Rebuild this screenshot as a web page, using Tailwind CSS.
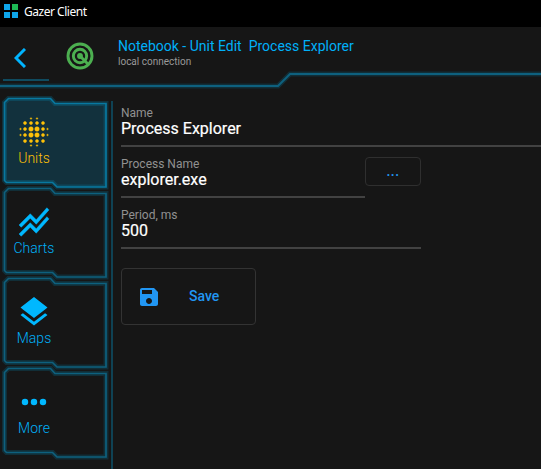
<!DOCTYPE html>
<html lang="en">
<head>
<meta charset="utf-8">
<title>Gazer Client</title>
<script src="https://cdn.jsdelivr.net/npm/@tailwindcss/browser@4"></script>
</head>
<body class="w-[541px] h-[469px] overflow-hidden bg-[#161616] font-[Roboto,sans-serif] flex flex-col">
<div class="h-[27px] shrink-0 bg-black flex items-start pl-1 pt-1 gap-[6px]">
  <svg class="size-[14px]" viewBox="0 0 14 14"><path fill="#0ea5e9" d="M0 0h6v6H0zM0 8h6v6H0zM8 8h6v6H8z"/><path fill="#1db954" d="M8 0h6v6H8z"/></svg>
  <span class="font-['Noto_Sans',sans-serif] text-[12px] leading-[16px] tracking-[-0.48px] text-white">Gazer Client</span>
</div>
<header class="h-[63px] shrink-0 relative flex">
  <svg class="absolute left-0 top-0 w-[541px] h-[63px]" viewBox="0 27 541 63" fill="none">
    <path d="M0 86H278L290 74H541" stroke="#0090c0" stroke-opacity=".2" stroke-width="5"/>
    <path d="M0 86H278L290 74H541" stroke="#0e607e" stroke-width="2"/>
  </svg>
  <div class="ml-[3px] w-[46px] h-[54px] border-b-2 border-[#0f4b60] flex items-center">
    <svg class="ml-[11px] mt-[9px] w-[12px] h-[20px]" viewBox="0 0 12 20" fill="none" stroke="#00b4ff" stroke-width="3"><path d="M11 1L2 10l9 9"/></svg>
  </div>
  <svg class="ml-[15px] mt-[13px] size-8" viewBox="0 0 24 24" fill="none" stroke="#4caf50" stroke-width="2.2"><circle cx="12" cy="12" r="9"/><circle cx="12" cy="12" r="5"/><circle cx="12" cy="12" r="2.2" fill="#4caf50" stroke="none"/><path d="M12 12l6.500 6.500"/></svg>
  <div class="ml-[22px] pt-[11px]">
    <div class="text-[14px] leading-[17px] text-[#00b0f8] whitespace-pre">Notebook - Unit Edit  Process Explorer</div>
    <div class="text-[10px] leading-[14px] text-[#999]">local connection</div>
  </div>
</header>
<div class="flex flex-1 min-h-0">
  <nav class="w-[111px] shrink-0 pt-1">
    <div class="relative h-[90px] w-[111px]">
      <svg class="absolute left-0 top-0 w-[111px] h-[98px]" viewBox="0 -4 111 98" fill="none"><path d="M4.500 4.500L8.500 .500H50.500L55 5.500H106V89H57L52.500 84.500H6.500L4.500 82.500Z" fill="#12313d" stroke="#0090c0" stroke-opacity=".22" stroke-width="5"/><path d="M4.500 4.500L8.500 .500H50.500L55 5.500H106V89H57L52.500 84.500H6.500L4.500 82.500Z" stroke="#0878a0" stroke-width="1.700"/></svg>
      <div class="relative w-[68px] pt-5 flex flex-col items-center">
        <svg class="size-9" viewBox="0 0 24 24" fill="#ffc107" stroke="#ffc107" stroke-width=".35"><circle cx="10" cy="10" r="1.500"/><circle cx="14" cy="10" r="1.500"/><circle cx="10" cy="14" r="1.500"/><circle cx="14" cy="14" r="1.500"/><circle cx="6" cy="6" r="1"/><circle cx="10" cy="6" r="1"/><circle cx="14" cy="6" r="1"/><circle cx="18" cy="6" r="1"/><circle cx="6" cy="10" r="1"/><circle cx="18" cy="10" r="1"/><circle cx="6" cy="14" r="1"/><circle cx="18" cy="14" r="1"/><circle cx="6" cy="18" r="1"/><circle cx="10" cy="18" r="1"/><circle cx="14" cy="18" r="1"/><circle cx="18" cy="18" r="1"/><circle cx="10" cy="3" r=".500"/><circle cx="14" cy="3" r=".500"/><circle cx="3" cy="10" r=".500"/><circle cx="3" cy="14" r=".500"/><circle cx="21" cy="10" r=".500"/><circle cx="21" cy="14" r=".500"/><circle cx="10" cy="21" r=".500"/><circle cx="14" cy="21" r=".500"/></svg>
        <span class="text-[14px] leading-4 font-light text-[#ffc107]">Units</span>
      </div>
    </div>
    <div class="relative h-[90px] w-[111px]">
      <svg class="absolute left-0 top-0 w-[111px] h-[98px]" viewBox="0 -4 111 98" fill="none"><path d="M4.500 4.500L8.500 .500H50.500L55 5.500H106V89H57L52.500 84.500H6.500L4.500 82.500Z" stroke="#0090c0" stroke-opacity=".2" stroke-width="5"/><path d="M4.500 4.500L8.500 .500H50.500L55 5.500H106V89H57L52.500 84.500H6.500L4.500 82.500Z" stroke="#0e607e" stroke-width="1.700"/></svg>
      <div class="relative w-[68px] pt-5 flex flex-col items-center">
        <svg class="size-9" viewBox="0 0 24 24" fill="#00b8ff" stroke="#00b8ff" stroke-width=".3"><path d="M2 19.990l7.500-7.510 4 4 7.090-7.970L22 9.920l-8.500 9.560-4-4-6 6.010-1.500-1.500zm1.500-4.500l6-6.010 4 4L22 3.920l-1.410-1.410-7.090 7.970-4-4L2 13.990l1.500 1.500z"/></svg>
        <span class="text-[14px] leading-4 font-light text-[#00b0f8]">Charts</span>
      </div>
    </div>
    <div class="relative h-[90px] w-[111px]">
      <svg class="absolute left-0 top-0 w-[111px] h-[98px]" viewBox="0 -4 111 98" fill="none"><path d="M4.500 4.500L8.500 .500H50.500L55 5.500H106V89H57L52.500 84.500H6.500L4.500 82.500Z" stroke="#0090c0" stroke-opacity=".2" stroke-width="5"/><path d="M4.500 4.500L8.500 .500H50.500L55 5.500H106V89H57L52.500 84.500H6.500L4.500 82.500Z" stroke="#0e607e" stroke-width="1.700"/></svg>
      <div class="relative w-[68px] pt-5 flex flex-col items-center">
        <svg class="size-9" viewBox="0 0 24 24" fill="#00b8ff"><path d="M11.990 18.540l-7.370-5.730L3 14.070l9 7 9-7-1.630-1.270-7.380 5.740zM12 16l7.360-5.730L21 9l-9-7-9 7 1.630 1.270L12 16z"/></svg>
        <span class="text-[14px] leading-4 font-light text-[#00b0f8]">Maps</span>
      </div>
    </div>
    <div class="relative h-[90px] w-[111px]">
      <svg class="absolute left-0 top-0 w-[111px] h-[98px]" viewBox="0 -4 111 98" fill="none"><path d="M4.500 4.500L8.500 .500H50.500L55 5.500H106V89H57L52.500 84.500H6.500L4.500 82.500Z" stroke="#0090c0" stroke-opacity=".2" stroke-width="5"/><path d="M4.500 4.500L8.500 .500H50.500L55 5.500H106V89H57L52.500 84.500H6.500L4.500 82.500Z" stroke="#0e607e" stroke-width="1.700"/></svg>
      <div class="relative w-[68px] pt-5 flex flex-col items-center">
        <svg class="size-9" viewBox="0 0 24 24" fill="#00b8ff"><circle cx="6" cy="12" r="2.150"/><circle cx="12" cy="12" r="2.150"/><circle cx="18" cy="12" r="2.150"/></svg>
        <span class="text-[14px] leading-4 font-light text-[#00b0f8]">More</span>
      </div>
    </div>
  </nav>
  <main class="flex-1 mt-[11px] border-l-2 border-[#0f4254] pl-2 pt-[5px]">
    <div class="h-[41px] border-b-2 border-[#424242]">
      <div class="text-[12px] leading-[14px] text-[#919191]">Name</div>
      <div class="text-[16px] leading-[18px] text-white [-webkit-text-stroke:0.2px_white]">Process Explorer</div>
    </div>
    <div class="flex pt-[10px] h-[51px]">
      <div class="w-[244px] border-b-2 border-[#424242]">
        <div class="text-[12px] leading-[14px] text-[#919191]">Process Name</div>
        <div class="text-[16px] leading-[18px] text-white [-webkit-text-stroke:0.2px_white]">explorer.exe</div>
      </div>
      <button class="w-[56px] h-[29px] border border-[#2f2f2f] rounded-[4px] text-[14px] leading-[27px] font-medium tracking-[0.5px] text-[#2196f3]">...</button>
    </div>
    <div class="mt-[10px] w-[300px] h-[41px] border-b-2 border-[#424242]">
      <div class="text-[12px] leading-[14px] text-[#919191]">Period, ms</div>
      <div class="text-[16px] leading-[18px] text-white [-webkit-text-stroke:0.2px_white]">500</div>
    </div>
    <button class="mt-[19px] w-[135px] h-[57px] border border-[#333] rounded-[4px] flex items-center pl-[15px]">
      <svg class="size-6" viewBox="0 0 24 24" fill="#2196f3"><path d="M17 3H5c-1.110 0-2 .900-2 2v14c0 1.100.890 2 2 2h14c1.100 0 2-.900 2-2V7l-4-4zm-5 16c-1.660 0-3-1.340-3-3s1.340-3 3-3 3 1.340 3 3-1.340 3-3 3zm3-10H5V5h10v4z"/></svg>
      <span class="ml-[28px] text-[14px] font-medium text-[#2196f3]">Save</span>
    </button>
  </main>
</div>
</body>
</html>
